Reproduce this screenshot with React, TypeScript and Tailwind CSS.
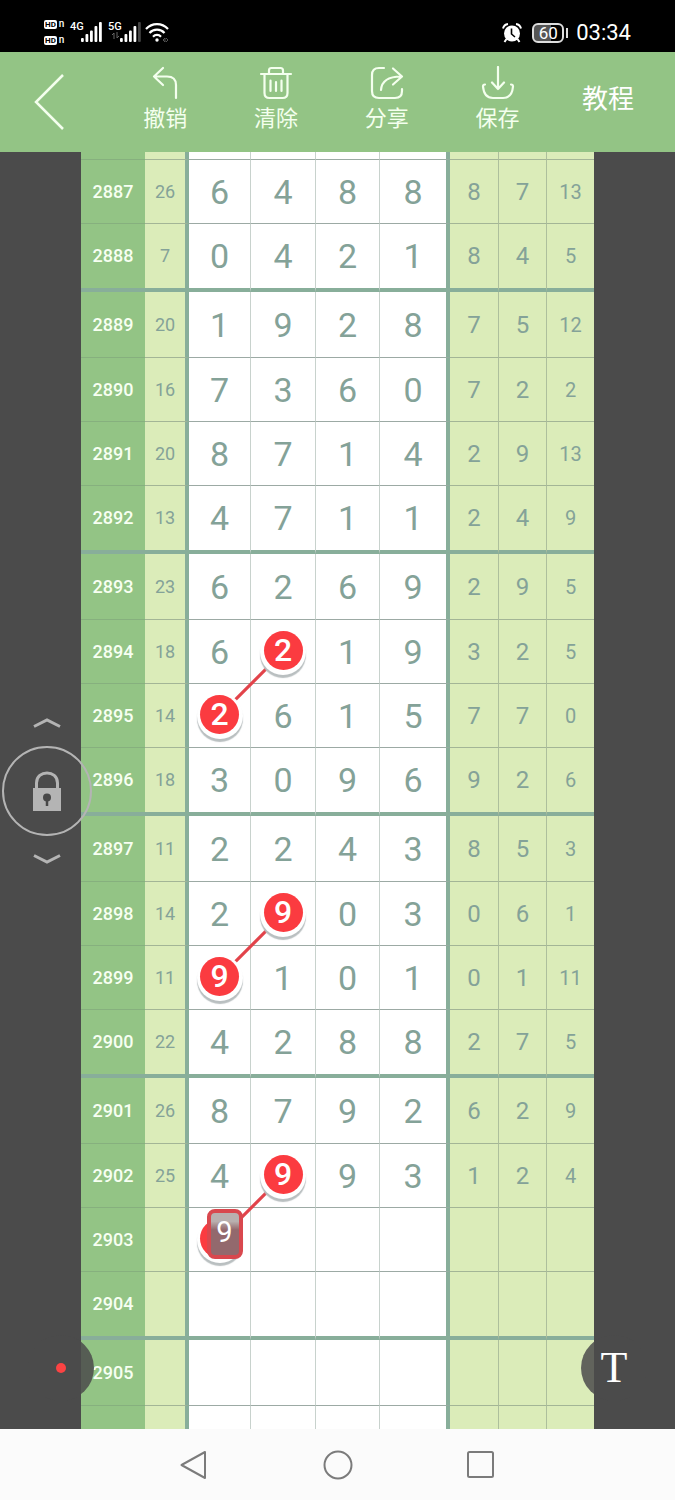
import { useState } from "react";
import clsx from "clsx";

type Row = {
  id: string;
  sum: string;
  digits: string[];
  extra: string[];
};

type Mark = { digit: string; line?: boolean; picked?: boolean };

const row = (id: number, sum = "", digits = "", extra = ""): Row => ({
  id: String(id),
  sum,
  digits: [0, 1, 2, 3].map((i) => digits[i] ?? ""),
  extra: [0, 1, 2].map((i) => extra.split(" ")[i] ?? ""),
});

const ROWS: Row[] = [
  row(2887, "26", "6488", "8 7 13"),
  row(2888, "7", "0421", "8 4 5"),
  row(2889, "20", "1928", "7 5 12"),
  row(2890, "16", "7360", "7 2 2"),
  row(2891, "20", "8714", "2 9 13"),
  row(2892, "13", "4711", "2 4 9"),
  row(2893, "23", "6269", "2 9 5"),
  row(2894, "18", "6219", "3 2 5"),
  row(2895, "14", "2615", "7 7 0"),
  row(2896, "18", "3096", "9 2 6"),
  row(2897, "11", "2243", "8 5 3"),
  row(2898, "14", "2903", "0 6 1"),
  row(2899, "11", "9101", "0 1 11"),
  row(2900, "22", "4288", "2 7 5"),
  row(2901, "26", "8792", "6 2 9"),
  row(2902, "25", "4993", "1 2 4"),
  row(2903),
  row(2904),
  row(2905),
];

// key is "<row id>-<digit column>"
const MARKS: Record<string, Mark> = {
  "2894-1": { digit: "2", line: true },
  "2895-0": { digit: "2" },
  "2898-1": { digit: "9", line: true },
  "2899-0": { digit: "9" },
  "2902-1": { digit: "9", line: true },
  "2903-0": { digit: "9", picked: true },
};

function SignalBars({ weak }: { weak?: boolean }) {
  return (
    <svg width="21" height="20" viewBox="0 0 21 20" fill="#fff">
      <rect x="0" y="16" width="2.8" height="4" rx="1" />
      <rect x="4.500" y="12" width="2.8" height="8" rx="1" />
      <rect x="9" y="8.500" width="2.8" height="11.5" rx="1" />
      <rect x="13.500" y="4" width="2.8" height="16" rx="1" />
      <rect x="18" y="0" width="2.8" height="20" rx="1" fill={weak ? "#444" : "#fff"} />
    </svg>
  );
}

function StatusBar() {
  return (
    <div className="flex h-13 items-center justify-between bg-black pt-3 pr-11 pl-11 text-white">
      <div className="flex items-center">
        <div className="mr-1 flex w-[22px] flex-col gap-1.5">
          {["a", "b"].map((k) => (
            <div key={k} className="flex h-[10px] items-center gap-0.5 text-[10px] leading-none font-medium">
              <span className="rounded-xs bg-white px-px text-[8px] leading-[9px] font-bold text-black">HD</span>
              <span>n</span>
            </div>
          ))}
        </div>
        <div className="flex h-5 items-start">
          <span className="w-[11px] text-[11px] leading-[10px] font-medium">4G</span>
          <SignalBars />
        </div>
        <div className="ml-1.5 flex h-5 items-start">
          <div className="w-[12px]">
            <div className="text-[11px] leading-[10px] font-medium">5G</div>
            <svg className="ml-1" width="8" height="7" viewBox="0 0 8 7" fill="none" stroke="#666" strokeWidth="1">
              <path d="M2 7V1L0 3M5 0v6l2-2" />
            </svg>
          </div>
          <SignalBars weak />
        </div>
        <svg className="ml-1" width="24" height="20" viewBox="0 0 24 20" fill="none" stroke="#fff" strokeWidth="2.200">
          <path d="M1 7C7 .5 17 .5 23 7M4.500 11c4-4.500 11-4.500 15 0M8 14.700c2.200-2.400 5.800-2.400 8 0" />
          <circle cx="12" cy="18" r="1.700" fill="#fff" stroke="none" />
          <path d="M18 18l2-2v4zM21 16l2 2-2 2" stroke="#555" strokeWidth="1" />
        </svg>
      </div>
      <div className="flex items-center pt-0.5">
        <svg width="20" height="20" viewBox="0 0 20 20" fill="#fff">
          <circle cx="10" cy="10.500" r="8" />
          <path d="M1 5.500Q2 1.500 6 1M14 1q4 .5 5 4.500M4.500 16l-2 3M15.500 16l2 3" stroke="#fff" strokeWidth="2" fill="none" />
          <path d="M9.500 5.500v5.500l3.500 3" stroke="#000" strokeWidth="1.600" fill="none" />
        </svg>
        <div className="ml-2.5 flex h-5 w-8 items-center justify-center rounded-md border-2 border-[#ddd] bg-[linear-gradient(to_right,#555_60%,#000_60%)] text-[17px] leading-none">
          60
        </div>
        <div className="ml-0.5 h-2.5 w-0.5 bg-[#ddd]" />
        <time className="ml-2 text-[22px] leading-6">03:34</time>
      </div>
    </div>
  );
}

const ACTIONS = [
  { label: "撤销", path: "M14 2L5 10.500l9 8.500M5 10.500h13Q27 10.500 27 19v13" },
  {
    label: "清除",
    path: "M1 8h30M9 8V4.500Q9 2 11.500 2h9Q23 2 23 4.500V8M4.500 8v19Q4.500 32 9.500 32h13Q27.500 32 27.500 27V8M10.500 14.500V25M16 16v9M21.500 14.500V25",
  },
  {
    label: "分享",
    path: "M13 2H8Q1 2 1 9v16q0 7 7 7h16q7 0 7-7v-2M10 24Q11 10.500 30 10.500M22 2.500l9 8-9 8",
  },
  { label: "保存", path: "M16 1v22M10 16.500l6 6.500 6-6.500M3 18.500Q1 18.500 1 20.500 2 32 11 32h10q9 0 10-11.500 0-2-2-2" },
];

function Toolbar() {
  return (
    <header className="flex h-[100px] bg-[#93c485] text-white">
      <button type="button" aria-label="返回" className="flex w-[110px] shrink-0 items-center pl-[34px]">
        <svg width="30" height="56" viewBox="0 0 30 56" fill="none" stroke="#f4ffee" strokeWidth="2.500">
          <path d="M29 1L2 28l27 27" />
        </svg>
      </button>
      <nav className="grid flex-1 grid-cols-4">
        {ACTIONS.map((a) => (
          <button key={a.label} type="button" className="flex flex-col items-center pt-3.5 text-[22px] leading-8 text-[#f4ffee]">
            <svg
              className="mb-[3px]"
              width="34"
              height="34"
              viewBox="-1 0 34 34"
              fill="none"
              stroke="currentColor"
              strokeWidth="2.200"
              strokeLinecap="round"
              strokeLinejoin="round"
            >
              <path d={a.path} />
            </svg>
            {a.label}
          </button>
        ))}
      </nav>
      <button type="button" className="w-[122px] shrink-0 pr-3 pb-1.5 text-[26px]">
        教程
      </button>
    </header>
  );
}

function Marker({ mark }: { mark: Mark }) {
  return (
    <>
      {mark.line && (
        <svg className="absolute top-1/2 right-1/2 z-10" width="65" height="65" viewBox="0 0 65 65">
          <path d="M0 65L65 0" stroke="#e2434a" strokeWidth="3.200" />
        </svg>
      )}
      <div className="absolute inset-0 z-20 flex items-center justify-center">
        <div className="flex size-[46px] shrink-0 items-start justify-center rounded-full bg-white pt-0.5 shadow-[0_3px_1px_#b9bfc0]">
          <span className="flex size-[39px] items-center justify-center rounded-full bg-[#fb3b40] text-[32px] leading-none font-medium text-white">
            {!mark.picked && mark.digit}
          </span>
        </div>
      </div>
      {mark.picked && (
        <div className="absolute inset-0 z-20 flex items-center justify-center pb-3 pl-2.5">
          <span className="flex h-[50px] w-9 shrink-0 justify-center rounded-lg border-4 border-[#d9484e] bg-linear-to-b from-[#b9b0af] from-20% to-[#93696d] to-40% pt-1 text-[29px] leading-[30px] text-white">
            {mark.digit}
          </span>
        </div>
      )}
    </>
  );
}

function Board() {
  return (
    <table className="w-full table-fixed border-separate border-spacing-0 bg-white text-center text-[#84a298]">
      <colgroup>
        <col className="w-[64px]" />
        <col className="w-[44px]" />
        <col className="w-[62px]" />
        <col className="w-[65px]" />
        <col className="w-[64px]" />
        <col className="w-[70px]" />
        <col className="w-[49px]" />
        <col className="w-[48px]" />
        <col className="w-[47px]" />
      </colgroup>
      <tbody>
        <BoardRow data={{ ...row(0), id: "" }} height="h-2" />
        {ROWS.map((r) => {
          // a thick rule closes every block of four rows
          const pos = Number(r.id) % 4;
          const last = pos === 0;
          const first = pos === 1;
          return <BoardRow key={r.id} data={r} thick={last} height={last ? "h-[68px]" : first ? "h-[66px]" : "h-16"} />;
        })}
        <BoardRow data={{ ...row(0), id: "" }} height="h-[23px]" open />
      </tbody>
    </table>
  );
}

function BoardRow({ data, height, thick, open }: { data: Row; height: string; thick?: boolean; open?: boolean }) {
  const line = open ? "border-b-0" : thick ? "border-b-4 border-b-[#88ae9a]" : "border-b";
  return (
    <tr className={height}>
      <th
        scope="row"
        className={clsx("bg-[#93c485] p-0 text-[18px] leading-none font-medium text-[#f7fff2]", line, !thick && "border-b-[#86b07e]")}
      >
        {data.id}
      </th>
      <td
        className={clsx(
          "border-r-4 border-r-[#88ae9a] bg-[#dbecb9] p-0 text-[18px] leading-none",
          line,
          !thick && "border-b-[#a3b596]"
        )}
      >
        {data.sum}
      </td>
      {data.digits.map((d, i) => {
        const mark = MARKS[`${data.id}-${i}`];
        return (
          <td
            key={i}
            className={clsx(
              "relative p-0 text-[34px] leading-none",
              line,
              !thick && "border-b-[#9caaa4]",
              i === 3 ? "border-r-4 border-r-[#88ae9a]" : "border-r border-r-[#c8d2cd]"
            )}
          >
            {mark ? <Marker mark={mark} /> : d}
          </td>
        );
      })}
      {data.extra.map((d, i) => (
        <td
          key={i}
          className={clsx(
            "bg-[#dbecb9] p-0 leading-none",
            line,
            !thick && "border-b-[#a3b596]",
            i < 2 ? "border-r border-r-[#adbf9c] text-[24px]" : "text-[20px]"
          )}
        >
          {d}
        </td>
      ))}
    </tr>
  );
}

function Chevron({ down }: { down?: boolean }) {
  return (
    <svg className={clsx(down && "rotate-180")} width="28" height="10" viewBox="0 0 28 10" fill="none" stroke="#b4b4b4" strokeWidth="3">
      <path d="M1 8.500L14 2l13 6.500" />
    </svg>
  );
}

function LockControl() {
  const [locked, setLocked] = useState(true);
  return (
    <div className="absolute top-[566px] left-0.5 z-30 flex flex-col items-center gap-[18px]">
      <Chevron />
      <button
        type="button"
        aria-label="锁定"
        aria-pressed={locked}
        onClick={() => setLocked(!locked)}
        className="flex size-[90px] items-center justify-center rounded-full border-2 border-[#b4b4b4]"
      >
        <svg width="30" height="40" viewBox="0 0 30 40">
          <path d="M4.500 18v-6C4.500-1.500 25.500-1.500 25.500 12v6" fill="none" stroke="#b4b4b4" strokeWidth="3" />
          <rect x="1" y="17" width="28" height="23" fill="#b4b4b4" />
          <circle cx="15" cy="26.500" r="4" fill="#484848" />
          <path d="M15 28v7" stroke="#484848" strokeWidth="2.500" />
        </svg>
      </button>
      <Chevron down />
    </div>
  );
}

function NavBar() {
  return (
    <footer className="flex h-[71px] items-center justify-center gap-[113px] bg-[#fbfbfb]">
      <button type="button" aria-label="后退">
        <svg width="30" height="30" viewBox="0 0 30 30" fill="none" stroke="#7b7b7b" strokeWidth="2" strokeLinejoin="round">
          <path d="M25 2v26L1.500 15z" />
        </svg>
      </button>
      <button type="button" aria-label="主页">
        <svg width="30" height="30" viewBox="0 0 30 30" fill="none" stroke="#7b7b7b" strokeWidth="2">
          <circle cx="15" cy="15" r="13.500" />
        </svg>
      </button>
      <button type="button" aria-label="最近任务">
        <svg width="30" height="30" viewBox="0 0 30 30" fill="none" stroke="#7b7b7b" strokeWidth="2">
          <rect x="2" y="2" width="25" height="25" rx="1.500" />
        </svg>
      </button>
    </footer>
  );
}

export default function App() {
  return (
    <div className="flex min-h-screen flex-col bg-[#4b4b4b] font-[Roboto,'Noto_Sans_CJK_SC',sans-serif]">
      <StatusBar />
      <Toolbar />
      <main className="relative flex-1 px-[12%]">
        <Board />
        <LockControl />
        {/* Pen color and text tools */}
        <button
          type="button"
          aria-label="画笔颜色"
          className="absolute bottom-7 left-7 z-30 flex size-[66px] items-center justify-center rounded-full bg-[#4b4b4b]/85"
        >
          <span className="size-2.5 rounded-full bg-[#fb4343]" />
        </button>
        <button
          type="button"
          className="absolute right-7 bottom-7 z-30 flex size-[66px] items-center justify-center rounded-full bg-[#4b4b4b]/85 font-['Liberation_Serif',serif] text-[44px] leading-none text-white"
        >
          T
        </button>
      </main>
      <NavBar />
    </div>
  );
}
